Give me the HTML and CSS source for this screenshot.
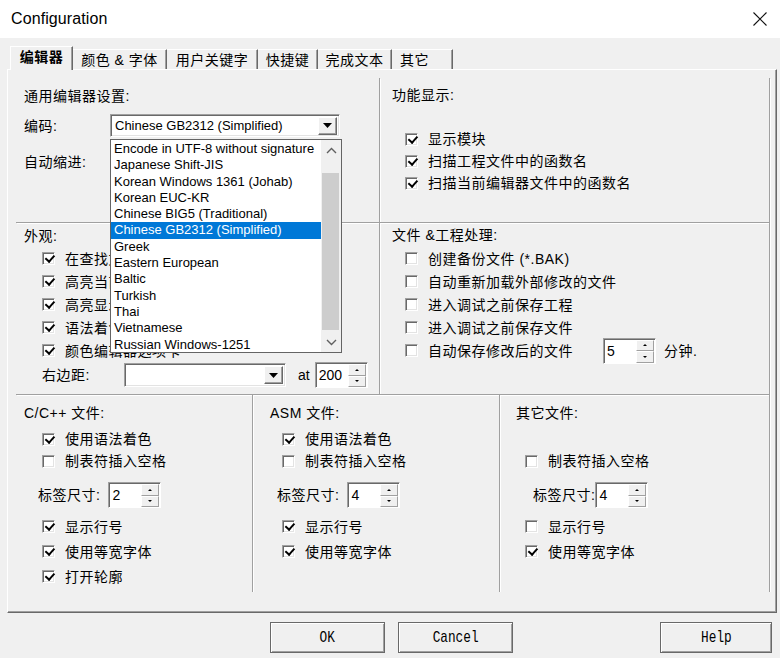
FILE: index.html
```html
<!DOCTYPE html>
<html lang="zh">
<head>
<meta charset="utf-8">
<title>Configuration</title>
<link rel="stylesheet" href="styles.css">
</head>
<body>
<div class="titlebar">
  <span class="title">Configuration</span>
  <svg class="close" width="14" height="14" viewBox="0 0 14 14"><path d="M0.5 0.5 L13.5 13.5 M13.5 0.5 L0.5 13.5" stroke="#111" stroke-width="1.1" fill="none"/></svg>
</div>

<div class="tabs">
  <div class="tab active">编辑器</div>
  <div class="tab w-color">颜色 &amp; 字体</div>
  <div class="tab w-user">用户关键字</div>
  <div class="tab w-short">快捷键</div>
  <div class="tab w-comp">完成文本</div>
  <div class="tab w-other">其它</div>
</div>

<div class="panel">
  <div class="grid-top">
    <section class="sec s-gen">
      <div class="sec-title">通用编辑器设置:</div>
      <div class="field-row enc-row">
        <span class="flabel w86">编码:</span>
        <div class="combo w230">
          <span class="combo-text">Chinese GB2312 (Simplified)</span>
          <span class="combo-btn"><svg width="9" height="5" viewBox="0 0 9 5"><path d="M0 0 H9 L4.5 5 Z" fill="#000"/></svg></span>
          <div class="listbox">
            <div class="opts">
              <div class="opt">Encode in UTF-8 without signature</div>
              <div class="opt">Japanese Shift-JIS</div>
              <div class="opt">Korean Windows 1361 (Johab)</div>
              <div class="opt">Korean EUC-KR</div>
              <div class="opt">Chinese BIG5 (Traditional)</div>
              <div class="opt sel">Chinese GB2312 (Simplified)</div>
              <div class="opt">Greek</div>
              <div class="opt">Eastern European</div>
              <div class="opt">Baltic</div>
              <div class="opt">Turkish</div>
              <div class="opt">Thai</div>
              <div class="opt">Vietnamese</div>
              <div class="opt">Russian Windows-1251</div>
            </div>
            <div class="vscroll">
              <span class="sb-arrow"><svg width="11" height="7" viewBox="0 0 11 7"><path d="M1 6 L5.5 1.5 L10 6" stroke="#606060" stroke-width="1.4" fill="none"/></svg></span>
              <span class="sb-track"><span class="sb-thumb"></span></span>
              <span class="sb-arrow"><svg width="11" height="7" viewBox="0 0 11 7"><path d="M1 1 L5.5 5.5 L10 1" stroke="#606060" stroke-width="1.4" fill="none"/></svg></span>
            </div>
          </div>
        </div>
      </div>
      <div class="field-row indent-row">
        <span class="flabel w86">自动缩进:</span>
        <div class="combo w150"><span class="combo-text">Smart</span></div>
      </div>
    </section>

    <section class="sec s-func">
      <div class="sec-title">功能显示:</div>
      <div class="cb-list func-list">
        <div class="cb-row"><span class="cb on"></span>显示模块</div>
        <div class="cb-row"><span class="cb on"></span>扫描工程文件中的函数名</div>
        <div class="cb-row"><span class="cb on"></span>扫描当前编辑器文件中的函数名</div>
      </div>
    </section>

    <section class="sec s-look">
      <div class="sec-title">外观:</div>
      <div class="cb-list look-list">
        <div class="cb-row r23"><span class="cb on"></span>在查找文件时显示消息对话框</div>
        <div class="cb-row r23"><span class="cb on"></span>高亮当前行</div>
        <div class="cb-row r23"><span class="cb on"></span>高亮显示匹配的括号</div>
        <div class="cb-row r23"><span class="cb on"></span>语法着色打印</div>
        <div class="cb-row r23"><span class="cb on"></span>颜色编辑器选项卡</div>
      </div>
      <div class="field-row margin-row">
        <span class="flabel w82">右边距:</span>
        <div class="combo w162">
          <span class="combo-text"></span>
          <span class="combo-btn"><svg width="9" height="5" viewBox="0 0 9 5"><path d="M0 0 H9 L4.5 5 Z" fill="#000"/></svg></span>
        </div>
        <span class="at">at</span>
        <div class="spin"><span class="spin-val">200</span><span class="spin-btns"><span><i class="up"></i></span><span><i class="dn"></i></span></span></div>
      </div>
    </section>

    <section class="sec s-file">
      <div class="sec-title">文件 &amp;工程处理:</div>
      <div class="cb-list file-list">
        <div class="cb-row r23"><span class="cb"></span>创建备份文件 (*.BAK)</div>
        <div class="cb-row r23"><span class="cb"></span>自动重新加载外部修改的文件</div>
        <div class="cb-row r23"><span class="cb"></span>进入调试之前保存工程</div>
        <div class="cb-row r23"><span class="cb"></span>进入调试之前保存文件</div>
        <div class="cb-row r23"><span class="cb"></span><span class="autosave">自动保存修改后的文件</span>
          <div class="spin"><span class="spin-val">5</span><span class="spin-btns"><span><i class="up"></i></span><span><i class="dn"></i></span></span></div>
          <span class="minutes">分钟.</span>
        </div>
      </div>
    </section>
  </div>

  <div class="grid-bottom">
    <section class="sec b-sec b-c">
      <div class="sec-title">C/C++ 文件:</div>
      <div class="cb-list b-list">
        <div class="cb-row r22"><span class="cb on"></span>使用语法着色</div>
        <div class="cb-row r22"><span class="cb"></span>制表符插入空格</div>
      </div>
      <div class="field-row tab-row">
        <span class="flabel">标签尺寸:</span>
        <div class="spin"><span class="spin-val">2</span><span class="spin-btns"><span><i class="up"></i></span><span><i class="dn"></i></span></span></div>
      </div>
      <div class="cb-list b-list2">
        <div class="cb-row r25"><span class="cb on"></span>显示行号</div>
        <div class="cb-row r25"><span class="cb on"></span>使用等宽字体</div>
        <div class="cb-row r25"><span class="cb on"></span>打开轮廓</div>
      </div>
    </section>

    <section class="sec b-sec b-asm">
      <div class="sec-title">ASM 文件:</div>
      <div class="cb-list b-list">
        <div class="cb-row r22"><span class="cb on"></span>使用语法着色</div>
        <div class="cb-row r22"><span class="cb"></span>制表符插入空格</div>
      </div>
      <div class="field-row tab-row">
        <span class="flabel">标签尺寸:</span>
        <div class="spin"><span class="spin-val">4</span><span class="spin-btns"><span><i class="up"></i></span><span><i class="dn"></i></span></span></div>
      </div>
      <div class="cb-list b-list2">
        <div class="cb-row r25"><span class="cb on"></span>显示行号</div>
        <div class="cb-row r25"><span class="cb on"></span>使用等宽字体</div>
      </div>
    </section>

    <section class="sec b-sec b-oth">
      <div class="sec-title">其它文件:</div>
      <div class="cb-list b-list">
        <div class="cb-row r22"></div>
        <div class="cb-row r22"><span class="cb"></span>制表符插入空格</div>
      </div>
      <div class="field-row tab-row">
        <span class="flabel">标签尺寸:</span>
        <div class="spin"><span class="spin-val">4</span><span class="spin-btns"><span><i class="up"></i></span><span><i class="dn"></i></span></span></div>
      </div>
      <div class="cb-list b-list2">
        <div class="cb-row r25"><span class="cb"></span>显示行号</div>
        <div class="cb-row r25"><span class="cb on"></span>使用等宽字体</div>
      </div>
    </section>
  </div>
</div>

<div class="btns">
  <button class="btn"><span>OK</span></button>
  <button class="btn cancel"><span>Cancel</span></button>
  <button class="btn help"><span>Help</span></button>
</div>
</body>
</html>
```

FILE: styles.css
```css
* { box-sizing: border-box; }
html, body { margin: 0; padding: 0; }
body {
  width: 780px;
  height: 658px;
  overflow: hidden;
  background: #f0f0f0;
  color: #000;
  font-family: "Liberation Sans", "Noto Sans CJK SC", sans-serif;
  font-size: 14px;
  line-height: 18px;
}

/* title bar */
.titlebar {
  height: 38px;
  background: #fff;
  display: flex;
  align-items: center;
  padding-left: 11px;
}
.title { font-size: 16px; line-height: 20px; letter-spacing: 0.1px; }
.close { margin-left: auto; margin-right: 13px; width: 14px; height: 14px; }

/* tabs */
.tabs {
  height: 31px;
  display: flex;
  align-items: flex-end;
  padding: 8px 0 0 10px;
}
.tab {
  height: 20px;
  border-top: 1px solid #fff;
  border-left: 1px solid #fff;
  border-right: 1px solid #696969;
  box-shadow: inset -1px 0 0 #a0a0a0;
  display: flex;
  align-items: center;
  justify-content: center;
  letter-spacing: 0.5px;
  white-space: nowrap;
  font-size: 14px;
}
.tab.active {
  width: 63px;
  height: 24px;
  margin-bottom: -1px;
  background: #f0f0f0;
  position: relative;
  z-index: 2;
  padding-bottom: 3px;
  font-weight: 700;
}
.w-color { width: 94px; border-left: none; }
.w-user { width: 91px; border-left: none; }
.w-short { width: 60px; border-left: none; }
.w-comp { width: 74px; border-left: none; }
.w-other { width: 61px; border-left: none; justify-content: flex-start; padding-left: 8px; }

/* panel */
.panel {
  margin-left: 7px;
  width: 770px;
  height: 544px;
  border-top: 1px solid #fff;
  border-left: 1px solid #fff;
  border-right: 1px solid #696969;
  border-bottom: 1px solid #696969;
  box-shadow: inset -1px -1px 0 #a0a0a0;
  padding: 8px 6px 0 8px;
  position: relative;
  z-index: 1;
}
.grid-top {
  display: grid;
  grid-template-columns: 364px 390px;
  grid-template-rows: 145px 172px;
}
.grid-bottom {
  display: grid;
  grid-template-columns: 237px 247px 270px;
  height: 197px;
}
.sec {
  border-right: 1px solid #a0a0a0;
  box-shadow: 1px 0 0 #fff;
  white-space: nowrap;
}
.grid-top .sec {
  border-bottom: 1px solid #a0a0a0;
  box-shadow: 1px 1px 0 #fff;
}
.sec-title { height: 18px; letter-spacing: 0.5px; }

.field-row { display: flex; align-items: center; }
.flabel { letter-spacing: 0.5px; flex: none; }
.w86 { width: 86px; }
.w82 { width: 82px; }

/* combo */
.combo {
  position: relative;
  display: flex;
  align-items: center;
  height: 23px;
  background: #fff;
  border-top: 1px solid #a0a0a0;
  border-left: 1px solid #a0a0a0;
  border-right: 1px solid #fff;
  border-bottom: 1px solid #fff;
  box-shadow: inset 1px 1px 0 #696969, inset -1px -1px 0 #e3e3e3;
}
.w230 { width: 230px; }
.w162 { width: 162px; height: 24px; }
.w150 { width: 150px; }
.combo-text { padding-left: 4px; font-size: 13px; font-family: "Liberation Sans", sans-serif; }
.combo-btn {
  margin-left: auto;
  margin-right: 2px;
  width: 19px;
  height: 18px;
  background: #f0f0f0;
  border-top: 1px solid #fff;
  border-left: 1px solid #fff;
  border-right: 1px solid #696969;
  border-bottom: 1px solid #696969;
  box-shadow: inset -1px -1px 0 #a0a0a0;
  display: flex;
  align-items: center;
  justify-content: center;
}

/* drop-down list (popup, over content) */
.listbox {
  position: absolute;
  left: -1px;
  top: 24px;
  width: 232px;
  height: 214px;
  background: #fff;
  border: 1px solid #646464;
  display: flex;
  z-index: 10;
}
.opts { width: 210px; padding-top: 1px; }
.opt {
  height: 16.3px;
  line-height: 16px;
  padding-left: 3px;
  font-size: 13px;
  font-family: "Liberation Sans", sans-serif;
  white-space: nowrap;
  overflow: hidden;
}
.opt.sel { background: #0078d7; color: #fff; }
.vscroll {
  width: 20px;
  display: flex;
  flex-direction: column;
  background: #f0f0f0;
}
.sb-arrow {
  height: 20px;
  display: flex;
  align-items: center;
  justify-content: center;
}
.sb-track { flex: 1; padding: 13px 2px 0 1px; }
.sb-thumb { display: block; height: 157px; background: #cdcdcd; }

.s-gen { padding: 9px 0 0 8px; }
.enc-row { margin-top: 9px; height: 23px; }
.indent-row { margin-top: 13px; height: 23px; }

/* checkboxes */
.cb-list { display: flex; flex-direction: column; }
.cb-row {
  display: flex;
  align-items: center;
  height: 22px;
  letter-spacing: 0.5px;
  white-space: nowrap;
}
.r22 { height: 22px; }
.r23 { height: 23px; }
.r25 { height: 25px; }
.cb {
  flex: none;
  width: 13px;
  height: 13px;
  margin-right: 10px;
  background: #fff;
  border-top: 1px solid #a0a0a0;
  border-left: 1px solid #a0a0a0;
  border-right: 1px solid #fff;
  border-bottom: 1px solid #fff;
  box-shadow: inset 1px 1px 0 #696969, inset -1px -1px 0 #e3e3e3;
  position: relative;
}
.cb.on::after {
  content: "";
  position: absolute;
  left: 3.5px;
  top: 0px;
  width: 3.5px;
  height: 7px;
  border-right: 2.2px solid #000;
  border-bottom: 2.2px solid #000;
  transform: rotate(42deg);
}

.s-func { padding: 8px 0 0 12px; }
.func-list { margin-top: 24px; padding-left: 13px; }

.s-look { padding: 4px 0 0 8px; }
.look-list { margin-top: 2px; padding-left: 18px; }
.margin-row { margin-top: 1px; height: 24px; padding-left: 18px; }
.at { margin-left: 12px; margin-right: 5px; font-size: 14px; }

.s-file { padding: 3px 0 0 12px; }
.file-list { margin-top: 3px; padding-left: 13px; }
.autosave { width: 175px; }
.minutes { margin-left: 8px; letter-spacing: 0.5px; }

/* spinner */
.spin {
  flex: none;
  display: flex;
  width: 53px;
  height: 26px;
  background: #fff;
  border-top: 1px solid #a0a0a0;
  border-left: 1px solid #a0a0a0;
  border-right: 1px solid #fff;
  border-bottom: 1px solid #fff;
  box-shadow: inset 1px 1px 0 #696969;
}
.spin-val {
  flex: 1;
  padding: 3px 0 0 3px;
  font-size: 14px;
  line-height: 18px;
  font-family: "Liberation Sans", sans-serif;
  letter-spacing: 0;
}
.spin-btns { width: 19px; display: flex; flex-direction: column; padding: 1px 1px 0 0; }
.spin-btns > span {
  flex: 1;
  background: #f0f0f0;
  border-top: 1px solid #fff;
  border-left: 1px solid #fff;
  border-right: 1px solid #a0a0a0;
  border-bottom: 1px solid #a0a0a0;
  display: flex;
  align-items: center;
  justify-content: center;
}
.spin-btns i {
  display: block;
  width: 0;
  height: 0;
  border-left: 2px solid transparent;
  border-right: 2px solid transparent;
}
.spin-btns i.up { border-bottom: 2px solid #000; }
.spin-btns i.dn { border-top: 2px solid #000; }

/* bottom sections */
.b-sec { padding-top: 9px; }
.b-c { padding-left: 8px; }
.b-asm { padding-left: 17px; }
.b-oth { padding-left: 16px; }
.b-list { margin-top: 6px; }
.b-c .b-list, .b-c .b-list2 { padding-left: 18px; }
.b-asm .b-list, .b-asm .b-list2 { padding-left: 12px; }
.b-oth .b-list, .b-oth .b-list2 { padding-left: 9px; }
.tab-row { margin-top: 10px; height: 26px; }
.b-c .tab-row { padding-left: 14px; }
.b-asm .tab-row { padding-left: 7px; }
.b-oth .tab-row { padding-left: 17px; }
.b-c .tab-row .flabel, .b-asm .tab-row .flabel { margin-right: 8px; }
.b-list2 { margin-top: 6px; }

/* buttons */
.btns {
  display: flex;
  padding: 9px 8px 0 270px;
}
.btn {
  width: 115px;
  height: 31px;
  background: #f0f0f0;
  border: 1px solid #696969;
  box-shadow: inset 1px 1px 0 #fff, inset -1px -1px 0 #a0a0a0;
  padding: 0;
  display: flex;
  align-items: center;
  justify-content: center;
  font-family: "Liberation Mono", monospace;
  font-size: 17px;
  color: #000;
}
.btn span { display: inline-block; transform: scaleX(0.75); }
.cancel { margin-left: 13px; }
.help { margin-left: auto; width: 112px; }
```
